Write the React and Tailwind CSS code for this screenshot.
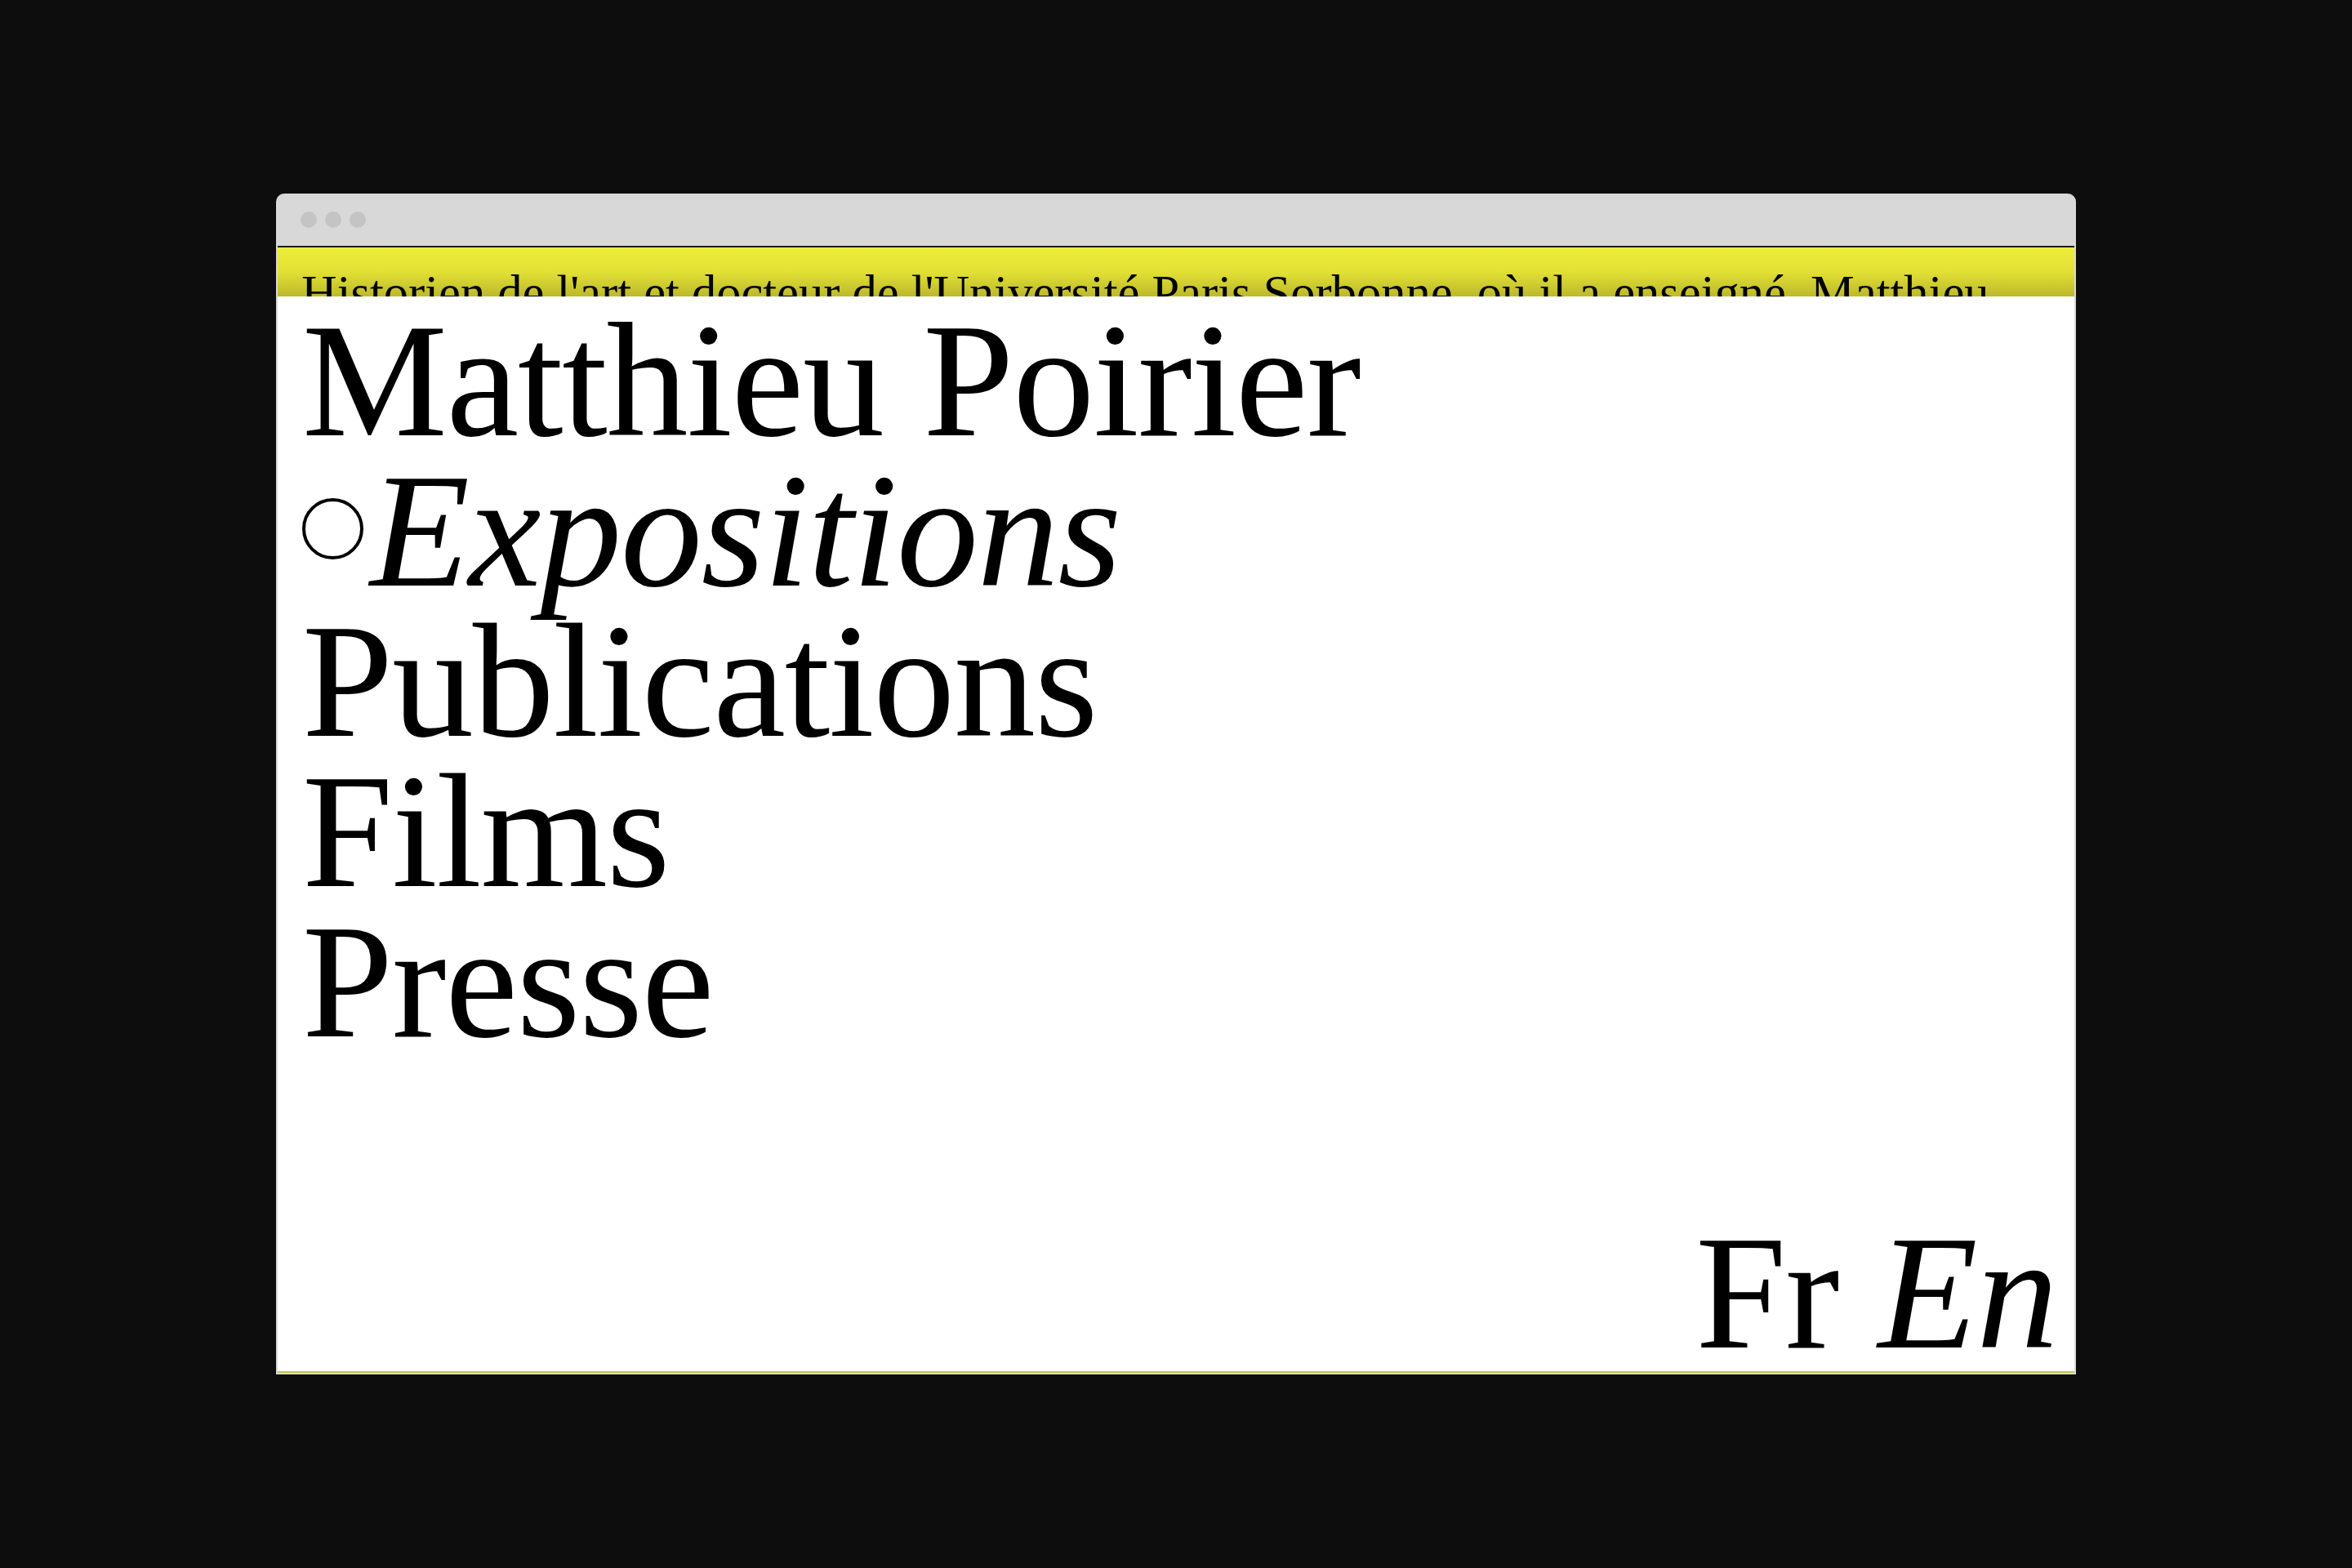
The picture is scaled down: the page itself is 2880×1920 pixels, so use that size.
const navItems = [
  { label: "Publications" },
  { label: "Films" },
  { label: "Presse" },
];

const WindowDots = () => (
  <div className="flex items-center gap-[10px] pl-[28px]">
    <span className="w-[20px] h-[20px] rounded-full bg-[#c4c4c4]" />
    <span className="w-[20px] h-[20px] rounded-full bg-[#c4c4c4]" />
    <span className="w-[20px] h-[20px] rounded-full bg-[#c4c4c4]" />
  </div>
);

const App = () => {
  return (
    <div className="w-full h-screen bg-[#0d0d0d] flex items-center justify-center font-['Liberation_Serif',serif] text-black">
      <div className="w-[2204px] h-[1446px] bg-[#d8d8d8] rounded-t-[10px] px-[2px] pb-[2px] flex flex-col">
        <div className="h-[64px] flex items-center shrink-0">
          <WindowDots />
        </div>
        <div className="h-[2px] bg-[#1c1c1c] shrink-0" />

        {/* bio strip, cut off on purpose */}
        <div className="h-[60px] overflow-hidden shrink-0 bg-gradient-to-b from-[#eded3a] via-[#e2e035] to-[#bcb92c] px-[29px] pt-[21px]">
          <p className="text-[60.5px] leading-[69px] whitespace-nowrap">
            Historien de l'art et docteur de l'Université Paris Sorbonne, où il a enseigné. Matthieu
          </p>
        </div>

        <div className="flex-1 bg-white flex flex-col justify-between pl-[30px] pr-[21px] pt-[11px] pb-[4px] border-b-2 border-[#c8c442]">
          <nav className="flex flex-col text-[200px] leading-[184px] tracking-[-1.3px]">
            <a className="whitespace-nowrap">Matthieu Poirier</a>
            <a className="whitespace-nowrap">
              <span className="inline-block w-[75px] h-[75px] rounded-full border-[4px] border-black align-[32px] mr-[8px]" />
              <span className="italic">Expositions</span>
            </a>
            {navItems.map((item) => (
              <a key={item.label} className="whitespace-nowrap">
                {item.label}
              </a>
            ))}
          </nav>

          <div className="flex justify-end gap-[48px] text-[200px] leading-[184px] tracking-[-1.3px]">
            <a>Fr</a>
            <a className="italic">En</a>
          </div>
        </div>
      </div>
    </div>
  );
};

export default App;
